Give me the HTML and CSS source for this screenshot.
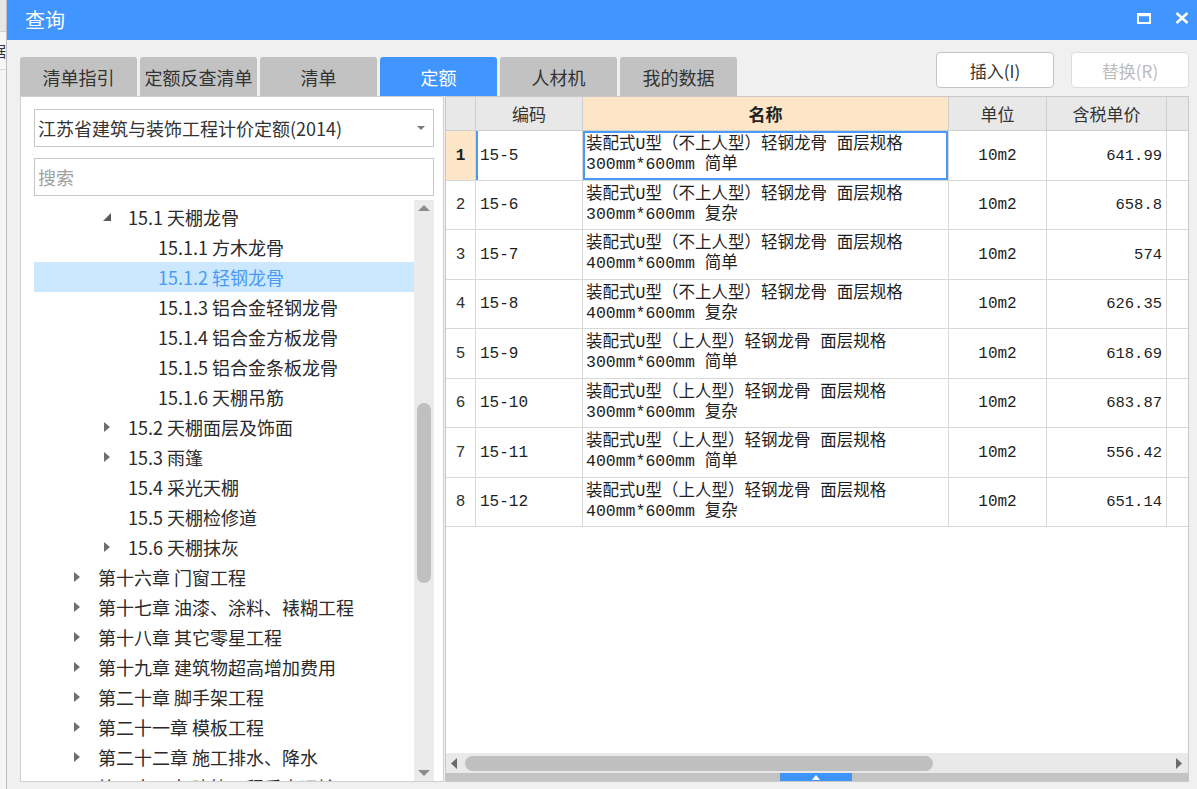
FILE: index.html
```html
<!DOCTYPE html>
<html lang="zh-CN">
<head>
<meta charset="utf-8">
<title>查询</title>
<link rel="stylesheet" href="styles.css">
</head>
<body>
<div class="screen">
  <div class="bg-strip">
    <div class="bg-top"></div>
    <div class="bg-row"><span>数据</span></div>
  </div>
  <div class="dialog">
    <div class="titlebar">
      <span class="title">查询</span>
      <div class="win-btns">
        <svg class="ico" width="14" height="11" viewBox="0 0 14 11"><rect x="1" y="1.5" width="12" height="8.5" fill="none" stroke="#fff" stroke-width="2"/><rect x="0" y="0" width="14" height="3.2" fill="#fff"/></svg>
        <svg class="ico" width="14" height="12" viewBox="0 0 14 12"><path d="M1.5 1 L12.5 11 M12.5 1 L1.5 11" stroke="#fff" stroke-width="2.6" fill="none"/></svg>
      </div>
    </div>
    <div class="content">
      <div class="toprow">
        <div class="tabs">
          <div class="tab">清单指引</div>
          <div class="tab">定额反查清单</div>
          <div class="tab">清单</div>
          <div class="tab active">定额</div>
          <div class="tab">人材机</div>
          <div class="tab">我的数据</div>
        </div>
        <div class="actions">
          <button class="btn">插入(I)</button>
          <button class="btn disabled">替换(R)</button>
        </div>
      </div>
      <div class="main">
        <div class="left">
          <div class="combo">
            <span>江苏省建筑与装饰工程计价定额(2014)</span>
            <svg width="8" height="4" viewBox="0 0 8 4"><path d="M0 0h8L4 4z" fill="#7a7a7a"/></svg>
          </div>
          <div class="search">搜索</div>
          <div class="tree-wrap">
            <div class="tree">
              <div class="node l2"><span class="tw"><svg width="8" height="8" viewBox="0 0 8 8"><path d="M8 0 L8 8 L0 8 Z" fill="#595959"/></svg></span>15.1 天棚龙骨</div>
              <div class="node l3"><span class="tw"></span>15.1.1 方木龙骨</div>
              <div class="node l3 sel"><span class="tw"></span>15.1.2 轻钢龙骨</div>
              <div class="node l3"><span class="tw"></span>15.1.3 铝合金轻钢龙骨</div>
              <div class="node l3"><span class="tw"></span>15.1.4 铝合金方板龙骨</div>
              <div class="node l3"><span class="tw"></span>15.1.5 铝合金条板龙骨</div>
              <div class="node l3"><span class="tw"></span>15.1.6 天棚吊筋</div>
              <div class="node l2"><span class="tw"><svg width="6" height="10" viewBox="0 0 6 10"><path d="M0 0 L6 5 L0 10Z" fill="#6e6e6e"/></svg></span>15.2 天棚面层及饰面</div>
              <div class="node l2"><span class="tw"><svg width="6" height="10" viewBox="0 0 6 10"><path d="M0 0 L6 5 L0 10Z" fill="#6e6e6e"/></svg></span>15.3 雨篷</div>
              <div class="node l2"><span class="tw"></span>15.4 采光天棚</div>
              <div class="node l2"><span class="tw"></span>15.5 天棚检修道</div>
              <div class="node l2"><span class="tw"><svg width="6" height="10" viewBox="0 0 6 10"><path d="M0 0 L6 5 L0 10Z" fill="#6e6e6e"/></svg></span>15.6 天棚抹灰</div>
              <div class="node l1"><span class="tw"><svg width="6" height="10" viewBox="0 0 6 10"><path d="M0 0 L6 5 L0 10Z" fill="#6e6e6e"/></svg></span>第十六章 门窗工程</div>
              <div class="node l1"><span class="tw"><svg width="6" height="10" viewBox="0 0 6 10"><path d="M0 0 L6 5 L0 10Z" fill="#6e6e6e"/></svg></span>第十七章 油漆、涂料、裱糊工程</div>
              <div class="node l1"><span class="tw"><svg width="6" height="10" viewBox="0 0 6 10"><path d="M0 0 L6 5 L0 10Z" fill="#6e6e6e"/></svg></span>第十八章 其它零星工程</div>
              <div class="node l1"><span class="tw"><svg width="6" height="10" viewBox="0 0 6 10"><path d="M0 0 L6 5 L0 10Z" fill="#6e6e6e"/></svg></span>第十九章 建筑物超高增加费用</div>
              <div class="node l1"><span class="tw"><svg width="6" height="10" viewBox="0 0 6 10"><path d="M0 0 L6 5 L0 10Z" fill="#6e6e6e"/></svg></span>第二十章 脚手架工程</div>
              <div class="node l1"><span class="tw"><svg width="6" height="10" viewBox="0 0 6 10"><path d="M0 0 L6 5 L0 10Z" fill="#6e6e6e"/></svg></span>第二十一章 模板工程</div>
              <div class="node l1"><span class="tw"><svg width="6" height="10" viewBox="0 0 6 10"><path d="M0 0 L6 5 L0 10Z" fill="#6e6e6e"/></svg></span>第二十二章 施工排水、降水</div>
              <div class="node l1"><span class="tw"><svg width="6" height="10" viewBox="0 0 6 10"><path d="M0 0 L6 5 L0 10Z" fill="#6e6e6e"/></svg></span>第二十三章 建筑工程垂直运输</div>
            </div>
            <div class="vscroll">
              <div class="varrow"><svg width="12" height="6" viewBox="0 0 12 6"><path d="M0 6 L6 0 L12 6Z" fill="#8c8c8c"/></svg></div>
              <div class="vthumb"></div>
              <div class="vspacer"></div>
              <div class="varrow"><svg width="12" height="6" viewBox="0 0 12 6"><path d="M0 0 L6 6 L12 0Z" fill="#8c8c8c"/></svg></div>
            </div>
          </div>
        </div>
        <div class="right">
          <div class="grid-wrap">
            <div class="grid">
              <div class="hd"></div>
              <div class="hd">编码</div>
              <div class="hd name">名称</div>
              <div class="hd">单位</div>
              <div class="hd">含税单价</div>
              <div class="hd">含税合价</div>

              <div class="c num cur">1</div>
              <div class="c code curcode">15-5</div>
              <div class="c nm selcell">装配式U型（不上人型）轻钢龙骨 面层规格<br>300mm*600mm 简单</div>
              <div class="c unit">10m2</div>
              <div class="c price">641.99</div>
              <div class="c"></div>

              <div class="c num">2</div>
              <div class="c code">15-6</div>
              <div class="c nm">装配式U型（不上人型）轻钢龙骨 面层规格<br>300mm*600mm 复杂</div>
              <div class="c unit">10m2</div>
              <div class="c price">658.8</div>
              <div class="c"></div>

              <div class="c num">3</div>
              <div class="c code">15-7</div>
              <div class="c nm">装配式U型（不上人型）轻钢龙骨 面层规格<br>400mm*600mm 简单</div>
              <div class="c unit">10m2</div>
              <div class="c price">574</div>
              <div class="c"></div>

              <div class="c num">4</div>
              <div class="c code">15-8</div>
              <div class="c nm">装配式U型（不上人型）轻钢龙骨 面层规格<br>400mm*600mm 复杂</div>
              <div class="c unit">10m2</div>
              <div class="c price">626.35</div>
              <div class="c"></div>

              <div class="c num">5</div>
              <div class="c code">15-9</div>
              <div class="c nm">装配式U型（上人型）轻钢龙骨 面层规格<br>300mm*600mm 简单</div>
              <div class="c unit">10m2</div>
              <div class="c price">618.69</div>
              <div class="c"></div>

              <div class="c num">6</div>
              <div class="c code">15-10</div>
              <div class="c nm">装配式U型（上人型）轻钢龙骨 面层规格<br>300mm*600mm 复杂</div>
              <div class="c unit">10m2</div>
              <div class="c price">683.87</div>
              <div class="c"></div>

              <div class="c num">7</div>
              <div class="c code">15-11</div>
              <div class="c nm">装配式U型（上人型）轻钢龙骨 面层规格<br>400mm*600mm 简单</div>
              <div class="c unit">10m2</div>
              <div class="c price">556.42</div>
              <div class="c"></div>

              <div class="c num">8</div>
              <div class="c code">15-12</div>
              <div class="c nm">装配式U型（上人型）轻钢龙骨 面层规格<br>400mm*600mm 复杂</div>
              <div class="c unit">10m2</div>
              <div class="c price">651.14</div>
              <div class="c"></div>
            </div>
          </div>
          <div class="hscroll">
            <svg width="6" height="11" viewBox="0 0 6 11"><path d="M6 0 L0 5.5 L6 11Z" fill="#6b6b6b"/></svg>
            <div class="hthumb"></div>
            <div class="hspacer"></div>
            <svg width="6" height="11" viewBox="0 0 6 11"><path d="M0 0 L6 5.5 L0 11Z" fill="#6b6b6b"/></svg>
          </div>
          <div class="bottombar">
            <div class="handle"><svg width="8" height="5" viewBox="0 0 8 5"><path d="M0 5 L4 0 L8 5Z" fill="#fff"/></svg></div>
          </div>
        </div>
      </div>
    </div>
  </div>
</div>
</body>
</html>
```

FILE: styles.css
```css
* { box-sizing: border-box; }

body {
  margin: 0;
  width: 1197px;
  height: 789px;
  overflow: hidden;
  background: #f0f0f0;
  font-family: "Noto Sans CJK SC", "Noto Sans", sans-serif;
}

.screen {
  display: flex;
  height: 789px;
}

/* background app strip */
.bg-strip {
  width: 7px;
  flex: none;
  background: #f6f6f6;
  border-right: 1px solid #bdbdbd;
  overflow: hidden;
}
.bg-top {
  height: 32px;
  background: #e6e6e6;
  border-bottom: 1px solid #d2d2d2;
}
.bg-row {
  height: 38px;
  display: flex;
  justify-content: flex-end;
  align-items: center;
  border-bottom: 1px solid #dcdcdc;
  font-size: 15px;
  color: #333;
  white-space: nowrap;
  overflow: hidden;
}

/* dialog */
.dialog {
  flex: 1;
  min-width: 0;
  display: flex;
  flex-direction: column;
}
.titlebar {
  height: 40px;
  flex: none;
  background: #4096fe;
  color: #fff;
  display: flex;
  align-items: center;
  justify-content: space-between;
  padding: 0 8px 0 18px;
}
.title {
  font-size: 20px;
  line-height: 1;
}
.win-btns {
  display: flex;
  align-items: center;
  gap: 24px;
  margin-top: -4px;
}
.ico { display: block; }

.content {
  flex: 1;
  min-height: 0;
  display: flex;
  flex-direction: column;
  padding: 12px 8px 7px 13px;
}

.toprow {
  height: 44px;
  flex: none;
  display: flex;
  justify-content: space-between;
}
.tabs {
  display: flex;
  gap: 3px;
  align-self: flex-end;
}
.tab {
  width: 117px;
  height: 39px;
  background: #c2c2c2;
  border-radius: 3px 3px 0 0;
  display: flex;
  align-items: center;
  justify-content: center;
  font-size: 18px;
  color: #333;
}
.tab.active {
  background: #4096fe;
  color: #fff;
}
.actions {
  display: flex;
  gap: 17px;
  align-self: flex-start;
}
.btn {
  width: 118px;
  height: 36px;
  background: #fff;
  border: 1px solid #c4c4c4;
  border-radius: 4px;
  font-family: "Noto Sans CJK SC", "Noto Sans", sans-serif;
  font-size: 17px;
  color: #333;
  padding: 0;
}
.btn.disabled {
  color: #bcbcbc;
  border-color: #dddddd;
}

.main {
  flex: 1;
  min-height: 0;
  display: flex;
  gap: 1px;
}

/* left panel */
.left {
  width: 424px;
  flex: none;
  background: #fff;
  border: 1px solid #cfcfcf;
  display: flex;
  flex-direction: column;
}
.combo {
  margin: 12px 9px 0 13px;
  height: 38px;
  flex: none;
  border: 1px solid #c6c6c6;
  display: flex;
  align-items: center;
  justify-content: space-between;
  padding: 0 8px 0 3px;
  font-size: 18px;
  color: #333;
}
.combo svg { display: block; }
.search {
  margin: 11px 9px 0 13px;
  height: 38px;
  flex: none;
  border: 1px solid #c6c6c6;
  display: flex;
  align-items: center;
  padding-left: 3px;
  font-size: 18px;
  color: #a0a0a0;
}
.tree-wrap {
  flex: 1;
  min-height: 0;
  display: flex;
  margin: 4px 9px 0 13px;
}
.tree {
  flex: 1;
  overflow: hidden;
  padding-top: 2px;
}
.node {
  height: 30px;
  display: flex;
  align-items: center;
  font-size: 18px;
  color: #2a2a2a;
  white-space: nowrap;
}
.node .tw {
  width: 20px;
  flex: none;
  display: flex;
  justify-content: center;
  align-items: center;
  margin-right: 11px;
}
.node .tw svg { display: block; }
.l1 { padding-left: 33px; }
.l2 { padding-left: 63px; }
.l3 { padding-left: 93px; }
.node.sel {
  background: #cce8ff;
  color: #4a9af4;
}

.vscroll {
  width: 20px;
  flex: none;
  background: #ebebeb;
  display: flex;
  flex-direction: column;
  align-items: center;
}
.varrow {
  height: 16px;
  display: flex;
  align-items: center;
  justify-content: center;
}
.varrow svg { display: block; }
.vthumb {
  width: 14px;
  height: 180px;
  margin-top: 187px;
  background: #c0c0c0;
  border-radius: 7px;
}
.vspacer { flex: 1; }

/* right table */
.right {
  flex: 1;
  min-width: 0;
  background: #fff;
  border: 1px solid #c8c8c8;
  display: flex;
  flex-direction: column;
}
.grid-wrap {
  flex: 1;
  min-height: 0;
  overflow: hidden;
}
.grid {
  display: grid;
  grid-template-columns: 30px 107px 366px 98px 120px 110px;
  grid-template-rows: 34px 50px 49px 50px 49px 50px 49px 50px 49px;
  width: 880px;
}
.hd, .c {
  border-right: 1px solid #d8d8d8;
  border-bottom: 1px solid #d8d8d8;
}
.hd {
  background: #e8e8e8;
  border-color: #cfcfcf;
  display: flex;
  align-items: center;
  justify-content: center;
  font-size: 17px;
  color: #333;
  white-space: nowrap;
  overflow: hidden;
}
.hd.name {
  background: #fde5c7;
  font-weight: bold;
  color: #222;
}
.c {
  display: flex;
  align-items: center;
  font-family: "Liberation Mono", "Noto Sans CJK SC", monospace;
  font-size: 16.5px;
  line-height: 20px;
  color: #1e1e1e;
  white-space: nowrap;
  overflow: hidden;
}
.c.num {
  justify-content: center;
  color: #333;
  font-size: 16px;
}
.c.num.cur {
  background: #fde5c7;
  font-weight: bold;
  color: #222;
}
.c.code { padding-left: 4px; font-size: 16px; }
.c.curcode { box-shadow: inset 2px 0 0 #4a9af5; }
.c.nm {
  display: block;
  padding: 4px 0 0 3px;
}
.c.selcell { box-shadow: inset 0 0 0 2px #4a9af5; }
.c.unit { justify-content: center; font-size: 16px; }
.c.price {
  justify-content: flex-end;
  padding-right: 4px;
  font-size: 15.5px;
}

.hscroll {
  height: 20px;
  flex: none;
  background: #e9e9e9;
  display: flex;
  align-items: center;
  padding: 0 6px 0 5px;
}
.hscroll svg { display: block; flex: none; }
.hthumb {
  width: 468px;
  height: 15px;
  margin-left: 8px;
  background: #bfbfbf;
  border-radius: 8px;
}
.hspacer { flex: 1; }

.bottombar {
  height: 8px;
  flex: none;
  background: #c3c3c3;
  padding-left: 334px;
}
.handle {
  width: 72px;
  height: 8px;
  background: #3d95fb;
  display: flex;
  align-items: center;
  justify-content: center;
}
.handle svg { display: block; }
```
